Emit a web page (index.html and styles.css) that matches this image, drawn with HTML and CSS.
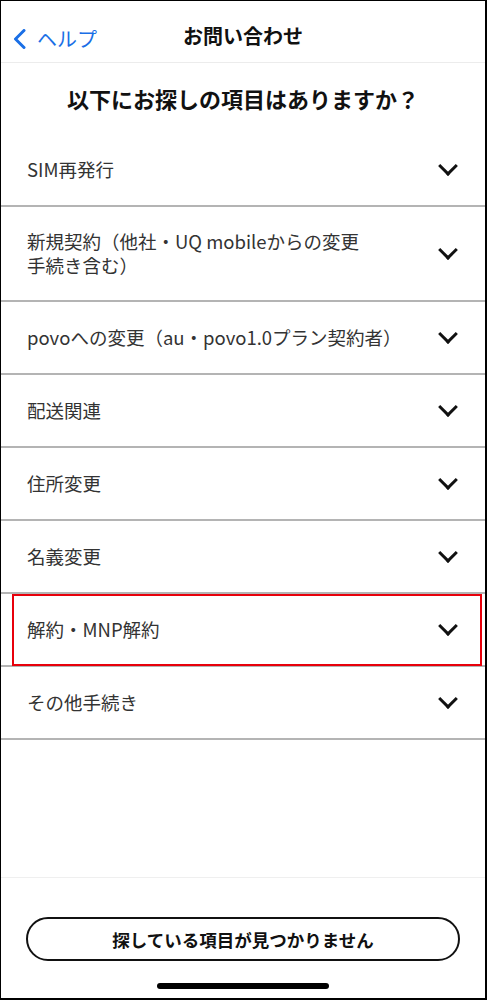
FILE: index.html
```html
<!DOCTYPE html>
<html lang="ja">
  <head>
    <meta charset="UTF-8">
    <meta name="viewport" content="width=device-width, initial-scale=1.0">
    <title>お問い合わせ</title>
    <link rel="stylesheet" href="styles.css">
  </head>
  <body>
    <div id="screen">

      <header class="nav">
        <a class="nav-back" href="#">
          <svg width="16" height="20" viewBox="0 0 16 20"><polyline points="12,1.5 3.5,10 12,18.5" fill="none" stroke="#1a6fe6" stroke-width="3" stroke-linecap="round" stroke-linejoin="round"/></svg>
          <span>ヘルプ</span>
        </a>
        <h1 class="nav-title">お問い合わせ</h1>
      </header>

      <h2 class="question">以下にお探しの項目はありますか？</h2>

      <ul class="topics">
        <li class="topic"><span>SIM再発行</span><i class="chev"></i></li>
        <li class="topic"><span>新規契約（他社・UQ mobileからの変更<br>手続き含む）</span><i class="chev"></i></li>
        <li class="topic"><span>povoへの変更（au・povo1.0プラン契約者）</span><i class="chev"></i></li>
        <li class="topic"><span>配送関連</span><i class="chev"></i></li>
        <li class="topic"><span>住所変更</span><i class="chev"></i></li>
        <li class="topic"><span>名義変更</span><i class="chev"></i></li>
        <li class="topic marked"><span>解約・MNP解約</span><i class="chev"></i></li>
        <li class="topic"><span>その他手続き</span><i class="chev"></i></li>
      </ul>

      <div class="spacer"></div>

      <footer class="bottom">
        <button class="not-found">探している項目が見つかりません</button>
        <div class="home-bar"></div>
      </footer>

    </div>
  </body>
</html>
```

FILE: styles.css
```css
* { box-sizing: border-box; }

body {
	margin: 0;
	background: #fff;
	font-family: "Noto Sans CJK JP", "Noto Sans", sans-serif;
	color: #111;
}

#screen {
	display: flex;
	flex-direction: column;
	height: 1000px;
	border-style: solid;
	border-color: #000;
	border-width: 1px 2px 2px 1px;
}

/* Top navigation bar */
.nav {
	position: relative;
	height: 62px;
	border-bottom: 1px solid #ececec;
	display: flex;
	align-items: center;
	justify-content: center;
}

.nav-back {
	position: absolute; /* sits over the centred title row */
	left: 11px;
	top: 23px;
	display: flex;
	align-items: center;
	gap: 9px;
	color: #1a6fe6;
	font-size: 20px;
	text-decoration: none;
}

.nav-title {
	margin: 0;
	font-size: 20px;
	font-weight: 700;
	padding-top: 8px;
}

.question {
	margin: 0;
	height: 71px;
	line-height: 70px;
	text-align: center;
	font-size: 22px;
	font-weight: 700;
	color: #111;
}

/* Accordion list */
.topics {
	list-style: none;
	margin: 0;
	padding: 0;
}

.topic {
	position: relative;
	display: flex;
	align-items: center;
	justify-content: space-between;
	min-height: 73px;
	padding: 22px 25px 23px 26px;
	border-bottom: 2px solid #b4b4b4;
	font-size: 18.5px;
	line-height: 24px;
	color: #333;
}

.chev {
	width: 14px;
	height: 14px;
	margin-right: 5px;
	margin-bottom: 6px;
	border-right: 3px solid #111;
	border-bottom: 3px solid #111;
	transform: rotate(45deg);
	flex: none;
}

/* red annotation frame */
.topic.marked::after {
	content: "";
	position: absolute;
	top: 0;
	bottom: -1px;
	left: 11px;
	right: 3px;
	border: 2px solid #e8000b;
}

.spacer { flex: 1; }

.bottom {
	border-top: 1px solid #efefef;
	padding: 39px 0 9px;
	display: flex;
	flex-direction: column;
	align-items: center;
}

.not-found {
	width: 434px;
	height: 44px;
	border: 2px solid #111;
	border-radius: 22px;
	background: #fff;
	font-family: inherit;
	font-size: 17.5px;
	font-weight: 700;
	color: #111;
}

.home-bar {
	margin-top: 22px;
	width: 172px;
	height: 6px;
	border-radius: 3px;
	background: #000;
}
```
